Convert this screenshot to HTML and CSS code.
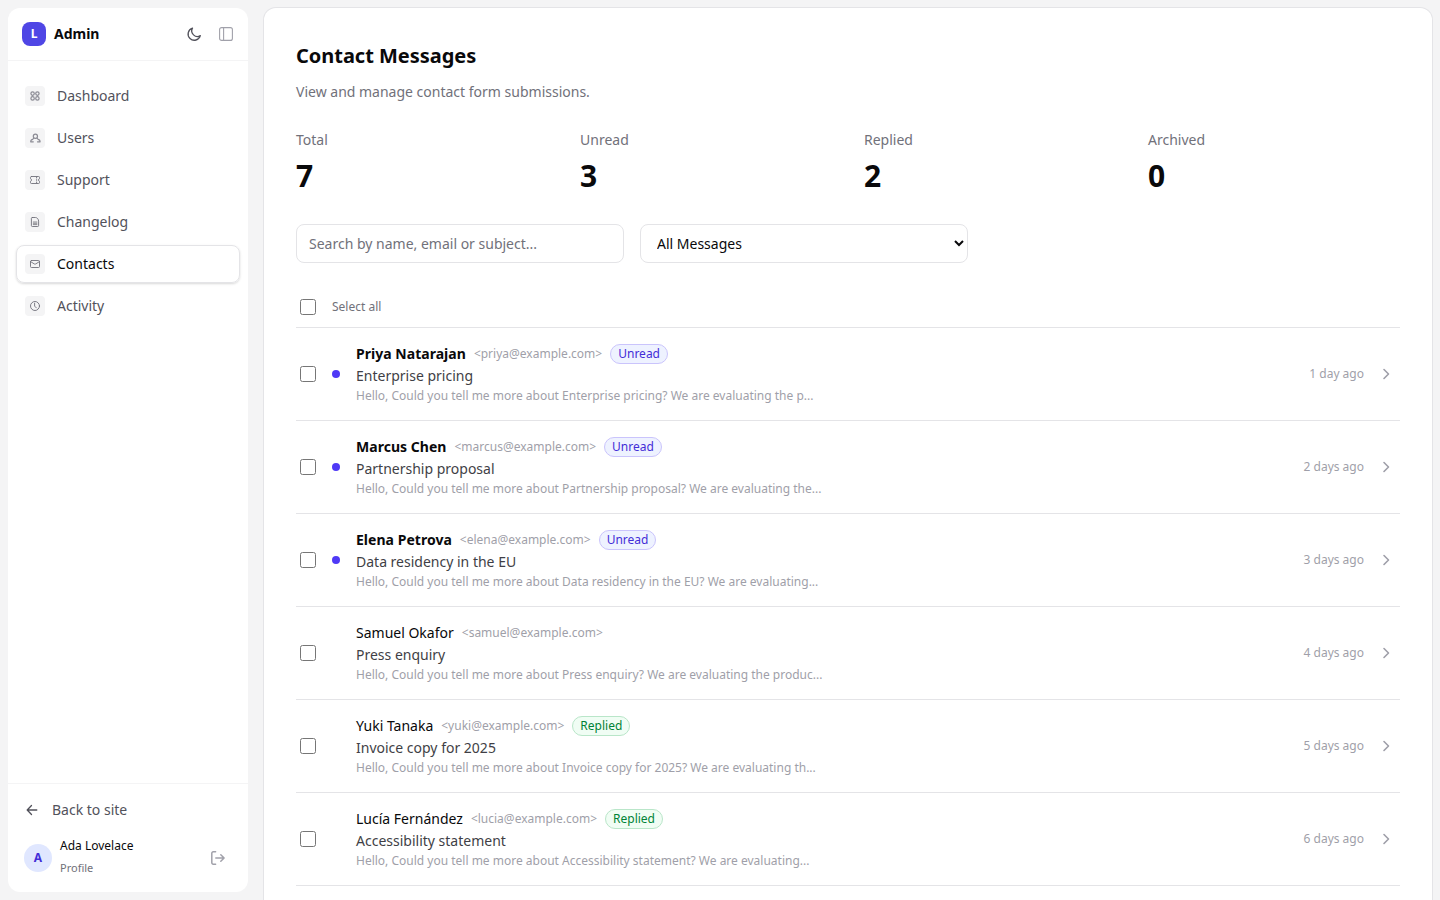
FILE: index.html
```html
<!DOCTYPE html>
<html lang="en">
<head>
  <meta charset="UTF-8">
  <meta name="viewport" content="width=device-width, initial-scale=1.0">
  <title>Contact Messages - Admin</title>
  <link rel="stylesheet" href="styles.css">
</head>

<body>
  <aside class="sidebar">
    <div class="sidebar-header">
      <span class="logo">L</span>
      <span class="brand">Admin</span>
      <button class="icon-btn theme-btn" aria-label="Toggle theme">
        <svg width="16" height="16" viewBox="0 0 16 16"><path d="M14.3 9.6A5.6 5.6 0 0 1 6.5 2.1 6.2 6.2 0 1 0 14.3 9.6Z"/></svg>
      </button>
      <button class="icon-btn" aria-label="Collapse sidebar">
        <svg width="16" height="16" viewBox="0 0 16 16"><rect x="1.6" y="1.6" width="12.8" height="12.8" rx="2"/><path d="M5.6 2v12"/></svg>
      </button>
    </div>

    <nav class="nav">
      <a class="nav-item" href="#">
        <span class="nav-icon"><svg class="bold" viewBox="0 0 20 20"><circle cx="7.6" cy="7.6" r="1.7"/><circle cx="12.4" cy="7.6" r="1.7"/><circle cx="7.6" cy="12.4" r="1.7"/><circle cx="12.4" cy="12.4" r="1.7"/></svg></span>
        Dashboard
      </a>
      <a class="nav-item" href="#">
        <span class="nav-icon"><svg class="bold" viewBox="0 0 20 20"><circle cx="10.4" cy="8.2" r="2.1"/><path d="M8.8 10.2 7.4 11.6M12 10.2l1.4 1.4M6.9 11.6c-.9.4-1.2 1.1-1.2 2.2h2.6M13.9 11.6c.9.4 1.2 1.1 1.2 2.2h-2.6"/></svg></span>
        Users
      </a>
      <a class="nav-item" href="#">
        <span class="nav-icon"><svg viewBox="0 0 20 20"><path d="M6.4 6.5h7.2a.9.9 0 0 1 .9.9v1.2a1.5 1.5 0 0 0 0 2.8v1.2a.9.9 0 0 1-.9.9H6.4a.9.9 0 0 1-.9-.9v-1.2a1.5 1.5 0 0 0 0-2.8V7.4a.9.9 0 0 1 .9-.9Z"/><path d="M11.6 7.2v.8M11.6 9.6v.8M11.6 12v.8"/></svg></span>
        Support
      </a>
      <a class="nav-item" href="#">
        <span class="nav-icon"><svg viewBox="0 0 20 20"><path d="M7.3 5.5h3.1c1.8 0 3.2 1.8 3.2 3.6v4.5a.9.9 0 0 1-.9.9H7.3a.9.9 0 0 1-.9-.9V6.4a.9.9 0 0 1 .9-.9Z"/><path class="fine" d="M8.3 10h3.6M8.3 11.3h3.6M8.3 12.6h3.6"/></svg></span>
        Changelog
      </a>
      <a class="nav-item active" href="#">
        <span class="nav-icon"><svg viewBox="0 0 20 20"><rect x="5.5" y="6.5" width="9" height="7" rx="1"/><path d="m5.6 7.6 3.6 2.3c.5.3 1.1.3 1.6 0l3.6-2.3"/></svg></span>
        Contacts
      </a>
      <a class="nav-item" href="#">
        <span class="nav-icon"><svg viewBox="0 0 20 20"><circle cx="10" cy="10" r="4.5"/><path d="M9.6 7.2v2.9l1.8 1.8"/></svg></span>
        Activity
      </a>
    </nav>

    <div class="sidebar-footer">
      <a class="back-link" href="#">
        <svg width="16" height="16" viewBox="0 0 16 16"><path d="M7.5 3.5 3.2 8l4.3 4.5M3.4 8h9.4"/></svg>
        Back to site
      </a>
      <div class="profile">
        <span class="avatar">A</span>
        <div class="profile-text">
          <span class="profile-name">Ada Lovelace</span>
          <span class="profile-link">Profile</span>
        </div>
        <button class="icon-btn logout-btn" aria-label="Log out">
          <svg width="16" height="16" viewBox="0 0 16 16"><path d="M5.6 1.8H3.2a1.4 1.4 0 0 0-1.4 1.4v9.6a1.4 1.4 0 0 0 1.4 1.4h2.4M10.8 4.7 14.1 8l-3.3 3.3M14 8H5.8"/></svg>
        </button>
      </div>
    </div>
  </aside>

  <main class="content">
    <h1>Contact Messages</h1>
    <p class="subtitle">View and manage contact form submissions.</p>

    <dl class="stats">
      <div><dt>Total</dt><dd>7</dd></div>
      <div><dt>Unread</dt><dd>3</dd></div>
      <div><dt>Replied</dt><dd>2</dd></div>
      <div><dt>Archived</dt><dd>0</dd></div>
    </dl>

    <div class="filters">
      <input type="text" placeholder="Search by name, email or subject...">
      <select>
        <option>All Messages</option>
        <option>Unread</option>
        <option>Replied</option>
        <option>Archived</option>
      </select>
    </div>

    <label class="select-all"><input type="checkbox"> Select all</label>

    <ul class="messages">
      <li class="message unread">
        <input type="checkbox">
        <span class="dot"></span>
        <div class="message-body">
          <div class="sender"><span class="name">Priya Natarajan</span><span class="email">&lt;priya@example.com&gt;</span><span class="badge badge-unread">Unread</span></div>
          <p class="subject">Enterprise pricing</p>
          <p class="preview">Hello, Could you tell me more about Enterprise pricing? We are evaluating the p...</p>
        </div>
        <span class="time">1 day ago</span>
        <svg class="chevron" viewBox="0 0 16 16"><path d="m6 3.5 4.5 4.5L6 12.5"/></svg>
      </li>
      <li class="message unread">
        <input type="checkbox">
        <span class="dot"></span>
        <div class="message-body">
          <div class="sender"><span class="name">Marcus Chen</span><span class="email">&lt;marcus@example.com&gt;</span><span class="badge badge-unread">Unread</span></div>
          <p class="subject">Partnership proposal</p>
          <p class="preview">Hello, Could you tell me more about Partnership proposal? We are evaluating the...</p>
        </div>
        <span class="time">2 days ago</span>
        <svg class="chevron" viewBox="0 0 16 16"><path d="m6 3.5 4.5 4.5L6 12.5"/></svg>
      </li>
      <li class="message unread">
        <input type="checkbox">
        <span class="dot"></span>
        <div class="message-body">
          <div class="sender"><span class="name">Elena Petrova</span><span class="email">&lt;elena@example.com&gt;</span><span class="badge badge-unread">Unread</span></div>
          <p class="subject">Data residency in the EU</p>
          <p class="preview">Hello, Could you tell me more about Data residency in the EU? We are evaluating...</p>
        </div>
        <span class="time">3 days ago</span>
        <svg class="chevron" viewBox="0 0 16 16"><path d="m6 3.5 4.5 4.5L6 12.5"/></svg>
      </li>
      <li class="message">
        <input type="checkbox">
        <span class="dot"></span>
        <div class="message-body">
          <div class="sender"><span class="name">Samuel Okafor</span><span class="email">&lt;samuel@example.com&gt;</span></div>
          <p class="subject">Press enquiry</p>
          <p class="preview">Hello, Could you tell me more about Press enquiry? We are evaluating the produc...</p>
        </div>
        <span class="time">4 days ago</span>
        <svg class="chevron" viewBox="0 0 16 16"><path d="m6 3.5 4.5 4.5L6 12.5"/></svg>
      </li>
      <li class="message">
        <input type="checkbox">
        <span class="dot"></span>
        <div class="message-body">
          <div class="sender"><span class="name">Yuki Tanaka</span><span class="email">&lt;yuki@example.com&gt;</span><span class="badge badge-replied">Replied</span></div>
          <p class="subject">Invoice copy for 2025</p>
          <p class="preview">Hello, Could you tell me more about Invoice copy for 2025? We are evaluating th...</p>
        </div>
        <span class="time">5 days ago</span>
        <svg class="chevron" viewBox="0 0 16 16"><path d="m6 3.5 4.5 4.5L6 12.5"/></svg>
      </li>
      <li class="message">
        <input type="checkbox">
        <span class="dot"></span>
        <div class="message-body">
          <div class="sender"><span class="name">Lucía Fernández</span><span class="email">&lt;lucia@example.com&gt;</span><span class="badge badge-replied">Replied</span></div>
          <p class="subject">Accessibility statement</p>
          <p class="preview">Hello, Could you tell me more about Accessibility statement? We are evaluating...</p>
        </div>
        <span class="time">6 days ago</span>
        <svg class="chevron" viewBox="0 0 16 16"><path d="m6 3.5 4.5 4.5L6 12.5"/></svg>
      </li>
    </ul>
  </main>
</body>
</html>
```

FILE: styles.css
```css
* {
  margin: 0;
  padding: 0;
  box-sizing: border-box;
}

body {
  display: flex;
  gap: 16px;
  height: 100vh;
  padding: 8px 8px 0;
  overflow: hidden;
  background: #f4f4f5;
  color: #09090b;
  font-family: "Noto Sans", sans-serif;
  font-size: 14px;
  line-height: 20px;
}

a {
  color: inherit;
  text-decoration: none;
}

input,
select,
button {
  font: inherit;
  color: inherit;
}

svg {
  display: block;
  flex-shrink: 0;
  fill: none;
  stroke: currentColor;
  stroke-width: 1.3;
  stroke-linecap: round;
  stroke-linejoin: round;
}

/* Sidebar */
.sidebar {
  display: flex;
  flex-direction: column;
  width: 240px;
  flex-shrink: 0;
  margin-bottom: 8px;
  border-radius: 12px;
  background: #fff;
}

.sidebar-header {
  display: flex;
  align-items: center;
  height: 53px;
  padding: 0 14px;
  border-bottom: 1px solid #f4f4f5;
}

.logo {
  display: grid;
  place-items: center;
  width: 24px;
  height: 24px;
  margin-right: 8px;
  border-radius: 8px;
  background: #4f46e5;
  color: #fff;
  font-size: 12px;
  font-weight: 700;
}

.brand {
  flex: 1;
  font-weight: 700;
}

.icon-btn {
  border: none;
  background: none;
  color: #a1a1aa;
  cursor: pointer;
}

.icon-btn svg {
  stroke-width: 1.1;
}

.theme-btn {
  margin-right: 16px;
  color: #52525b;
}

.theme-btn svg {
  stroke-width: 1.3;
}

.nav {
  display: flex;
  flex: 1;
  flex-direction: column;
  gap: 4px;
  padding: 16px 8px;
}

.nav-item {
  display: flex;
  align-items: center;
  gap: 12px;
  height: 38px;
  padding: 0 8px;
  border: 1px solid transparent;
  border-radius: 8px;
  color: #52525b;
}

.nav-item.active {
  border-color: #e4e4e7;
  box-shadow: 0 1px 3px rgba(0, 0, 0, 0.1), 0 1px 2px rgba(0, 0, 0, 0.06);
  color: #09090b;
}

.nav-icon {
  width: 20px;
  height: 20px;
  border-radius: 4px;
  background: #f4f4f5;
  color: #71717a;
}

.nav-icon svg {
  stroke-width: 0.9;
}

.nav-icon .bold {
  color: #8b8b94;
  stroke-width: 1.2;
}

.nav-icon .fine {
  stroke-width: 0.8;
}

.sidebar-footer {
  padding: 8px;
  border-top: 1px solid #f4f4f5;
}

.back-link {
  display: flex;
  align-items: center;
  gap: 12px;
  height: 36px;
  padding: 0 8px;
  color: #52525b;
}

.profile {
  display: flex;
  align-items: center;
  gap: 8px;
  height: 52px;
  margin-top: 4px;
  padding: 0 8px;
}

.avatar {
  display: grid;
  place-items: center;
  width: 28px;
  height: 28px;
  border-radius: 50%;
  background: #e0e7ff;
  color: #432dd7;
  font-size: 12px;
  font-weight: 700;
}

.profile-text {
  display: flex;
  flex: 1;
  flex-direction: column;
  padding-bottom: 4px;
}

.profile-name {
  font-size: 12px;
  line-height: 24px;
}

.profile-link {
  color: #71717a;
  font-size: 11px;
}

.logout-btn {
  margin-right: 6px;
}

.logout-btn svg {
  stroke-width: 1.5;
}

/* Main panel */
.content {
  flex: 1;
  padding: 32px;
  border-radius: 12px 12px 0 0;
  background: #fff;
  box-shadow: 0 0 0 1px #e4e4e7, 0 1px 2px rgba(0, 0, 0, 0.05);
}

h1 {
  font-size: 20px;
  font-weight: 700;
  letter-spacing: -0.03px;
  line-height: 32px;
}

.subtitle {
  margin-top: 10px;
  color: #71717a;
}

.stats {
  display: grid;
  grid-template-columns: repeat(4, 1fr);
  gap: 32px;
  margin-top: 28px;
}

.stats dt {
  color: #71717a;
}

.stats dd {
  margin-top: 8px;
  font-size: 30px;
  font-weight: 700;
  line-height: 36px;
}

.filters {
  display: grid;
  grid-template-columns: 1fr 1fr;
  gap: 16px;
  width: 672px;
  margin-top: 30px;
}

.filters input,
.filters select {
  height: 39px;
  padding: 0 12px;
  border: 1px solid #e4e4e7;
  border-radius: 8px;
  background: #fff;
}

.filters select {
  padding-right: 0;
}

.filters input::placeholder {
  color: #71717a;
}

input[type="checkbox"] {
  width: 16px;
  height: 16px;
}

.select-all {
  display: flex;
  align-items: center;
  gap: 16px;
  height: 40px;
  margin-top: 24px;
  padding: 0 4px;
  color: #71717a;
  font-size: 12px;
}

.messages {
  border-top: 1px solid #e4e4e7;
  list-style: none;
}

.message {
  display: flex;
  align-items: center;
  height: 93px;
  padding: 0 6px 0 4px;
  border-bottom: 1px solid #e4e4e7;
}

.dot {
  width: 8px;
  height: 8px;
  margin: 0 16px;
  border-radius: 50%;
}

.unread .dot {
  background: #4f39f6;
}

.message-body {
  flex: 1;
}

.sender {
  display: flex;
  align-items: center;
  gap: 8px;
}

.unread .name {
  font-weight: 700;
  letter-spacing: 0.03px;
}

.email,
.preview,
.time {
  color: #9f9fa9;
  font-size: 12px;
}

.badge {
  padding: 1px 7px;
  border: 1px solid;
  border-radius: 10px;
  font-size: 12px;
  line-height: 16px;
}

.badge-unread {
  border-color: #cac4fc;
  background: #eef2ff;
  color: #432dd7;
}

.badge-replied {
  border-color: #b9e6c9;
  background: #f0fdf4;
  color: #008236;
}

.subject {
  margin-top: 2px;
  color: #3f3f46;
}

.preview {
  margin-top: 2px;
  line-height: 16px;
}

.chevron {
  width: 16px;
  height: 16px;
  margin-left: 14px;
  color: #9f9fa9;
  stroke-width: 1.6;
}
```
